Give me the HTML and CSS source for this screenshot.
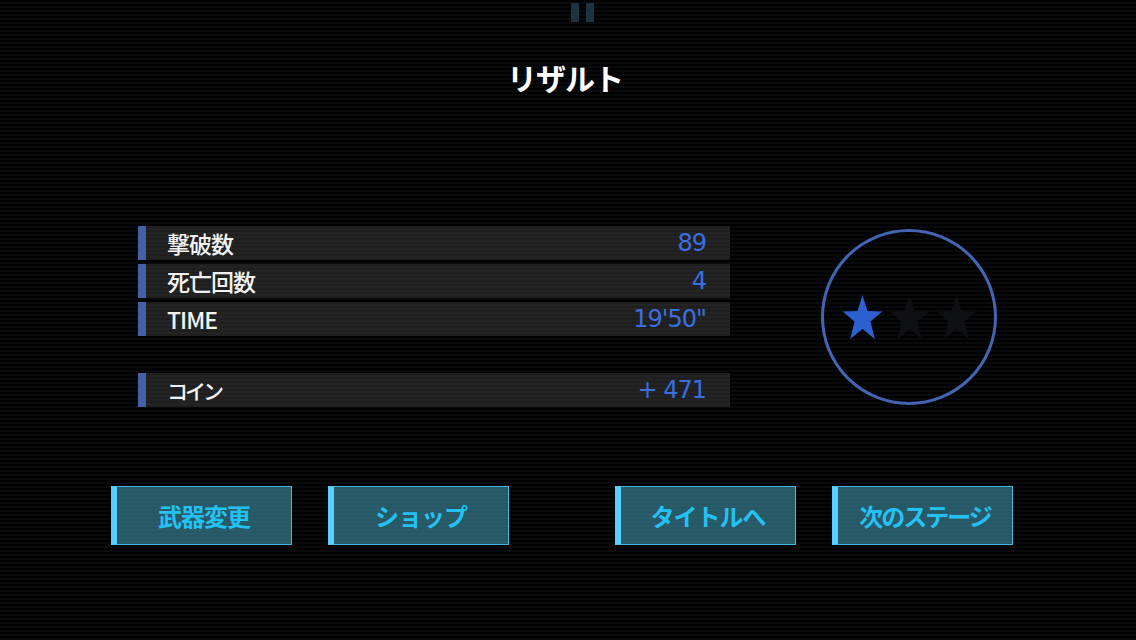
FILE: index.html
```html
<!DOCTYPE html>
<html lang="ja">
<head>
    <meta charset="UTF-8">
    <title>リザルト</title>
    <link rel="stylesheet" href="styles.css">
</head>
<body>
    <div class="screen">
        <div class="pause">
            <span class="bar"></span>
            <span class="bar"></span>
        </div>

        <h1 class="title">リザルト</h1>

        <div class="stats">
            <div class="rows">
                <div class="row">
                    <span class="label">撃破数</span>
                    <span class="value">89</span>
                </div>
                <div class="row">
                    <span class="label">死亡回数</span>
                    <span class="value">4</span>
                </div>
                <div class="row">
                    <span class="label">TIME</span>
                    <span class="value">19'50"</span>
                </div>
                <div class="row coin">
                    <span class="label kana">コイン</span>
                    <span class="value">+ 471</span>
                </div>
            </div>

            <div class="rank">
                <svg class="star on" viewBox="0 0 24 24" preserveAspectRatio="none">
                    <polygon points="12,0.5 14.9,8.9 23.6,9.1 16.7,14.4 19.2,23.5 12,18.2 4.8,23.5 7.3,14.4 0.4,9.1 9.1,8.9"/>
                </svg>
                <svg class="star" viewBox="0 0 24 24" preserveAspectRatio="none">
                    <polygon points="12,0.5 14.9,8.9 23.6,9.1 16.7,14.4 19.2,23.5 12,18.2 4.8,23.5 7.3,14.4 0.4,9.1 9.1,8.9"/>
                </svg>
                <svg class="star" viewBox="0 0 24 24" preserveAspectRatio="none">
                    <polygon points="12,0.5 14.9,8.9 23.6,9.1 16.7,14.4 19.2,23.5 12,18.2 4.8,23.5 7.3,14.4 0.4,9.1 9.1,8.9"/>
                </svg>
            </div>
        </div>

        <div class="actions">
            <div class="group">
                <div class="btn">武器変更</div>
                <div class="btn">ショップ</div>
            </div>
            <div class="group">
                <div class="btn">タイトルへ</div>
                <div class="btn narrow">次のステージ</div>
            </div>
        </div>
    </div>
</body>
</html>
```

FILE: styles.css
```css
body {
    margin: 0;
    background: #000;
    font-family: "Noto Sans CJK JP", "Noto Sans", sans-serif;
}
.screen {
    width: 1136px;
    height: 640px;
    overflow: hidden;
    background: repeating-linear-gradient(#000 0 2px, #090a0c 2px 4px);
}

/* pause mark */
.pause {
    display: flex;
    justify-content: center;
    gap: 7px;
    padding-top: 3px;
    margin-left: 29px;
}
.pause .bar {
    width: 8px;
    height: 19px;
    background: #1c3341;
}

.title {
    margin: 35px 0 0;
    padding-right: 6px;
    text-align: center;
    color: #fff;
    font-size: 30px;
    line-height: 40px;
    font-weight: 700;
    letter-spacing: -1px;
}

/* result table + rank circle */
.stats {
    display: flex;
    align-items: center;
    gap: 92px;
    margin-top: 129px;
    padding-left: 138px;
}
.rows {
    width: 592px;
    display: flex;
    flex-direction: column;
    gap: 4px;
}
.row {
    height: 34px;
    display: flex;
    align-items: center;
    justify-content: space-between;
    border-left: 8px solid #4560a6;
    background: repeating-linear-gradient(#1f1f1f 0 2px, #242424 2px 4px);
    padding: 0 24px 0 21px;
}
.row.coin {
    margin-top: 33px;
}
.label {
    color: #f2f2f2;
    font-size: 23px;
    font-weight: 500;
    letter-spacing: -1px;
}
.label.kana {
    font-size: 21px;
    letter-spacing: -3px;
}
.value {
    color: #3a6fe0;
    font-family: "DejaVu Sans", sans-serif;
    font-size: 24px;
    letter-spacing: -1px;
}

.rank {
    width: 176px;
    height: 176px;
    box-sizing: border-box;
    border: 3px solid #4465b2;
    border-radius: 50%;
    display: flex;
    align-items: center;
    justify-content: center;
    gap: 6px;
    margin-left: -1px;
}
.star {
    width: 41px;
    height: 46px;
    fill: #0f1011;
}
.star.on {
    fill: #2c5fd0;
}

/* bottom buttons */
.actions {
    display: flex;
    justify-content: space-between;
    width: 902px;
    margin-top: 79px;
    padding-left: 111px;
}
.group {
    display: flex;
    gap: 36px;
}
.btn {
    width: 181px;
    height: 59px;
    box-sizing: border-box;
    border: 1px solid #46b8e0;
    border-left: 6px solid #58d0ff;
    background: repeating-linear-gradient(#265866 0 2px, #295b69 2px 4px);
    display: flex;
    align-items: center;
    justify-content: center;
    color: #24c2f4;
    font-size: 24px;
    font-weight: 700;
    letter-spacing: -1px;
}
.btn.narrow {
    letter-spacing: -2px;
}
```
